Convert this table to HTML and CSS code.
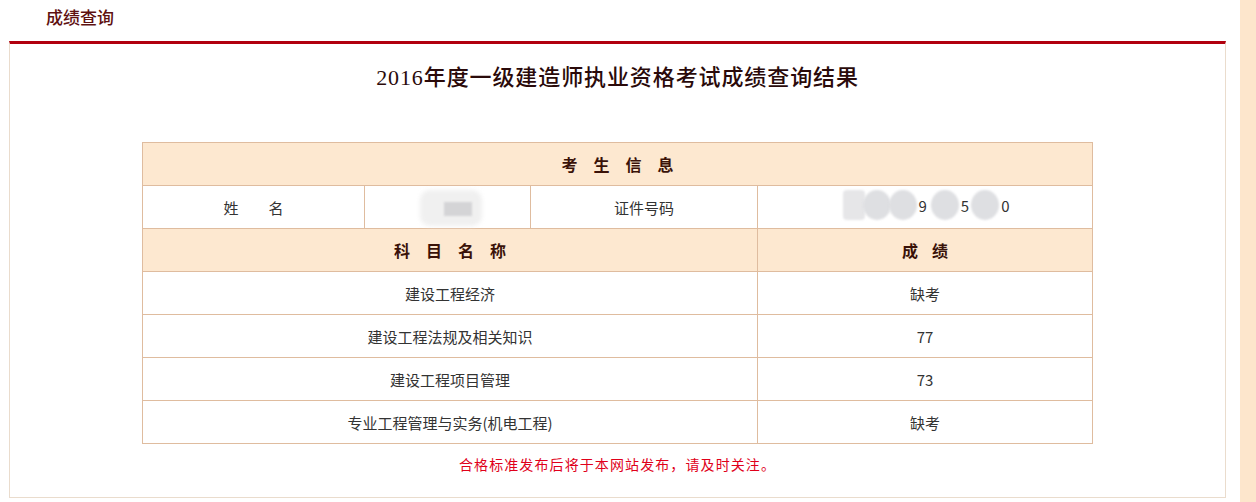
FILE: index.html
```html
<!DOCTYPE html>
<html lang="zh-CN">
<head>
<meta charset="utf-8">
<title>成绩查询</title>
<link rel="stylesheet" href="styles.css">
</head>
<body>
<div class="page">
  <div class="main">
    <div class="top-title">成绩查询</div>
    <div class="panel">
      <h1 class="result-title">2016年度一级建造师执业资格考试成绩查询结果</h1>
      <table class="score-table">
        <colgroup>
          <col class="c1"><col class="c2"><col class="c3"><col class="c4">
        </colgroup>
        <tr class="head"><td colspan="4"><span class="spaced">考生信息</span></td></tr>
        <tr>
          <td><span class="name-label"><span>姓</span><span>名</span></span></td>
          <td><span class="blur-name"><span class="bn1"></span><span class="bn2"></span></span></td>
          <td>证件号码</td>
          <td><span class="idno"><span class="blob b1"></span><span class="blob b2"></span><span class="blob b3"></span><span class="ch">9</span><span class="blob b4"></span><span class="ch">5</span><span class="blob b5"></span><span class="ch">0</span></span></td>
        </tr>
        <tr class="head"><td colspan="3"><span class="spaced">科目名称</span></td><td><span class="spaced narrow">成绩</span></td></tr>
        <tr><td colspan="3">建设工程经济</td><td>缺考</td></tr>
        <tr><td colspan="3">建设工程法规及相关知识</td><td>77</td></tr>
        <tr><td colspan="3">建设工程项目管理</td><td>73</td></tr>
        <tr><td colspan="3">专业工程管理与实务(机电工程)</td><td>缺考</td></tr>
      </table>
      <p class="note">合格标准发布后将于本网站发布，请及时关注。</p>
    </div>
  </div>
  <div class="side-strip"></div>
</div>
</body>
</html>
```

FILE: styles.css
```css
html, body {
  margin: 0;
  padding: 0;
  background: #fff;
}
body {
  font-family: "Noto Sans CJK SC", "Liberation Sans", sans-serif;
  font-size: 15px;
  color: #333;
}
.page {
  display: flex;
  height: 502px;
  overflow: hidden;
}
.main {
  flex: 1;
  padding-left: 9px;
  padding-right: 14px;
}
.side-strip {
  width: 16px;
  background: #fde6cc;
}
.top-title {
  height: 41px;
  line-height: 34px;
  padding-left: 37px;
  font-size: 17px;
  color: #5e1010;
  font-weight: 500;
}
.panel {
  border-top: 3px solid #b1000e;
  border-left: 1px solid #eadccd;
  border-right: 1px solid #eadccd;
  border-bottom: 1px solid #eadccd;
  height: 457px;
  box-sizing: border-box;
  padding-top: 19px;
}
.result-title {
  margin: 0;
  text-align: center;
  font-family: "Liberation Serif", "Noto Sans CJK SC", serif;
  font-size: 22px;
  font-weight: 500;
  line-height: 30px;
  color: #2a0a0a;
  letter-spacing: 0.9px;
}
.score-table {
  margin: 49px auto 0;
  width: 950px;
  border-collapse: collapse;
  table-layout: fixed;
}
.c1 { width: 222px; }
.c2 { width: 166px; }
.c3 { width: 227px; }
.c4 { width: 335px; }
.score-table td {
  border: 1px solid #dfbc9f;
  height: 42px;
  padding: 0;
  text-align: center;
  vertical-align: middle;
  color: #333;
}
.score-table tr.head td {
  background: #fde8d0;
  font-size: 16px;
  font-weight: 700;
  color: #3a1208;
}
.spaced {
  letter-spacing: 16px;
  margin-right: -16px;
}
.spaced.narrow {
  letter-spacing: 14px;
  margin-right: -14px;
}
.name-label {
  display: inline-flex;
  gap: 30px;
}
.blur-name {
  display: inline-block;
  position: relative;
  width: 60px;
  height: 30px;
  vertical-align: middle;
  left: 7px;
}
.bn1 {
  position: absolute;
  left: -4px;
  top: -2px;
  width: 62px;
  height: 36px;
  background: #f0f0f0;
  border-radius: 10px;
  filter: blur(2px);
}
.bn2 {
  position: absolute;
  left: 20px;
  top: 10px;
  width: 28px;
  height: 14px;
  background: #d4d4d6;
  filter: blur(1px);
}
.idno {
  display: inline-flex;
  align-items: center;
  height: 30px;
  position: relative;
  left: 2px;
  font-size: 15px;
  color: #333;
}
.blob {
  display: inline-block;
  width: 28px;
  height: 30px;
  border-radius: 50%;
  background: #dedfe2;
  filter: blur(1px);
}
.b1 { width: 22px; border-radius: 4px; background: #e6e6e8; }
.b2 { margin-left: -2px; }
.b3 { margin-left: -2px; }
.b4 { margin-left: 2px; }
.b5 { margin-left: 0; }
.ch { padding: 0 2px; }
.note {
  margin: 10px 0 0;
  text-align: center;
  color: #e0001a;
  font-size: 14px;
  letter-spacing: 1.1px;
}
```
